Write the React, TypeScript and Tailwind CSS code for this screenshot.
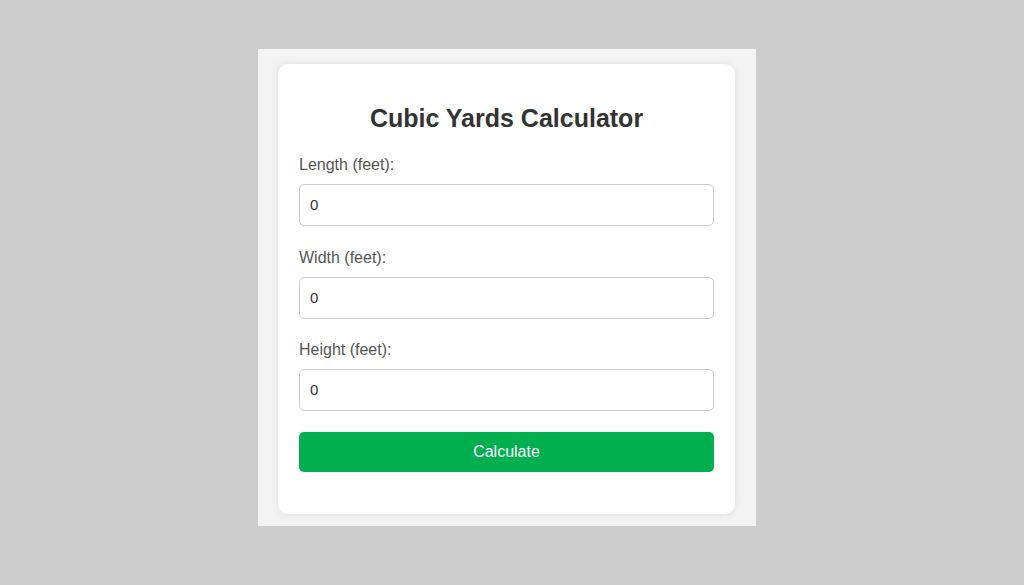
export default function App() {
  const fields = [
    { label: "Length (feet):", mt: "" },
    { label: "Width (feet):", mt: "mt-[23px]" },
    { label: "Height (feet):", mt: "mt-[22px]" },
  ];
  return (
    <div
      className="w-[1024px] h-[585px] bg-[#cccccc] flex justify-start items-start pt-[49px] pl-[258px]"
      style={{ fontFamily: '"Liberation Sans", Arial, sans-serif' }}
    >
      <div className="w-[498px] h-[477px] bg-[#f3f3f3] pl-[20px] pt-[15px]">
        <div className="w-[457px] h-[450px] bg-white rounded-[10px] shadow-[0_0_8px_rgba(0,0,0,0.08)] px-[21px] pt-[40px]">
          <h2 className="text-[25px] leading-[28px] font-bold text-[#333333] text-center mb-[24px]">
            Cubic Yards Calculator
          </h2>
          {fields.map((f) => (
            <div key={f.label} className={f.mt}>
              <label className="block text-[16px] leading-[18px] text-[#555555] mb-[10px]">{f.label}</label>
              <div className="h-[42px] border border-[#cccccc] rounded-[5px] flex items-center px-[10px] text-[15px] text-[#333333]">
                0
              </div>
            </div>
          ))}
          <button className="mt-[21px] w-full h-[40px] bg-[#00b050] rounded-[5px] text-white text-[16px] flex items-center justify-center">
            Calculate
          </button>
        </div>
      </div>
    </div>
  );
}
